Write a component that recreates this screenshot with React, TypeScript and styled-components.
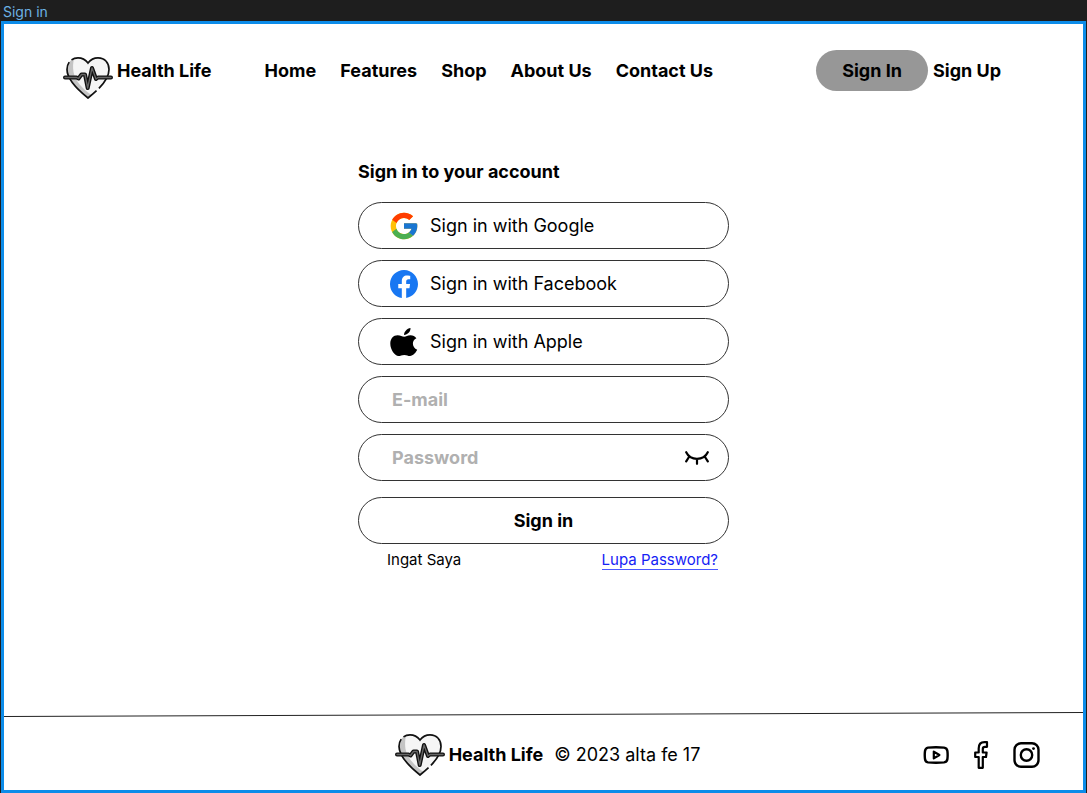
import React from "react";
import styled, { createGlobalStyle } from "styled-components";
import { FcGoogle } from "react-icons/fc";
import { BsFacebook } from "react-icons/bs";

const GlobalStyle = createGlobalStyle`
  *, *::before, *::after { box-sizing: border-box; }
  body {
    margin: 0;
    background: #1e1e1e;
    color: #000;
    font-family: Inter, "Liberation Sans", sans-serif;
    font-size: 18px;
  }
  button, input { font: inherit; color: inherit; }
  a { color: inherit; text-decoration: none; }
  svg { display: block; flex: none; }
`;

const Canvas = styled.div`
  display: flex;
  flex-direction: column;
  min-height: 100vh;
  padding: 0 1px;
`;

const FrameLabel = styled.div`
  padding: 3px 2px 0;
  font-size: 14px;
  line-height: 18px;
  color: #6cb2e4;
`;

const Frame = styled.div`
  flex: 1;
  display: flex;
  flex-direction: column;
  background: #fff;
  border: 3px solid #0c8ce9;
`;

const Header = styled.header`
  display: flex;
  align-items: flex-start;
  padding: 26px 82px 0 59px;
  font-weight: 700;
  line-height: 41px;
`;

const Brand = styled.a<{ $raised?: boolean }>`
  display: flex;
  align-items: ${(p) => (p.$raised ? "flex-start" : "center")};
  gap: 4px;
  padding-top: ${(p) => (p.$raised ? "7px" : "0")};
  font-weight: 700;
  line-height: 28px;
  white-space: nowrap;
`;

const Nav = styled.nav`
  display: flex;
  flex: 1;
  gap: 24px;
  margin-left: 53px;
  white-space: nowrap;
`;

const Auth = styled.div`
  display: flex;
  gap: 5px;
  white-space: nowrap;
`;

const PillLink = styled.a`
  padding: 0 26px;
  border-radius: 21px;
  background: #979797;
`;

const Main = styled.main`
  flex: 1;
  display: flex;
  justify-content: center;
  padding: 61px 16px 40px;
`;

const Form = styled.form`
  display: flex;
  flex-direction: column;
  gap: 11px;
  width: 100%;
  max-width: 371px;
`;

const Title = styled.h1`
  margin: 0 0 7px;
  font-size: 18px;
  line-height: 24px;
  font-weight: 700;
`;

const FieldButton = styled.button<{ $primary?: boolean }>`
  display: flex;
  align-items: center;
  justify-content: ${(p) => (p.$primary ? "center" : "flex-start")};
  gap: 12px;
  height: 47px;
  margin-top: ${(p) => (p.$primary ? "5px" : "0")};
  padding: 0 31px;
  border: 1px solid #333;
  border-radius: 24px;
  background: #fff;
  font-weight: ${(p) => (p.$primary ? 700 : 400)};
  cursor: pointer;
`;

const Field = styled.div`
  display: flex;
  align-items: center;
  height: 47px;
  padding: 0 18px 0 33px;
  border: 1px solid #333;
  border-radius: 24px;
`;

const Input = styled.input`
  flex: 1;
  min-width: 0;
  padding: 0;
  border: 0;
  outline: 0;
  background: transparent;
  font-weight: 700;
  &::placeholder { color: #b0b0b0; opacity: 1; }
`;

const IconButton = styled.button`
  padding: 0;
  border: 0;
  background: none;
  cursor: pointer;
`;

const Options = styled.div`
  display: flex;
  justify-content: space-between;
  margin-top: -5px;
  padding: 0 11px 0 29px;
  font-size: 15px;
  line-height: 20px;
`;

const ForgotLink = styled.a`
  color: #1522f5;
  border-bottom: 1px solid #4a58ff;
  line-height: 19px;
`;

const Rule = styled.svg`
  width: 100%;
  height: 5px;
`;

const Footer = styled.footer`
  display: grid;
  grid-template-columns: 1fr auto 1fr;
  align-items: center;
  height: 73px;
  padding: 2px 43px 0 51px;
`;

const FooterCenter = styled.div`
  grid-column: 2;
  display: flex;
  align-items: center;
  gap: 11px;
  white-space: nowrap;
`;

const Social = styled.div`
  display: flex;
  align-items: center;
  justify-content: flex-end;
  gap: 24px;
`;

const heart =
  "M25 6C21.500 1.500 18 .9 15 .9C8 .9 4 6 4 12.500C4 23 15 33 25 41C35 33 46 23 46 12.500C46 6 42 .9 35 .9C32 .9 28.500 1.500 25 6Z";
const pulse =
  "M2 20.5H13.5L15.5 21.5L18.5 17.5H22L24.7 31L29 11L33 22L35 20.5H48";

const HeartLogo = () => (
  <svg width="50" height="42" viewBox="0 0 50 42" fill="none" aria-hidden="true">
    <path d={heart} fill="#f5f5f5" />
    <path d="M11 1.800C6 3.500 4 8 4 12.500C4 23 15 33 25 41L28.500 38C20 32 12 24 10.500 15C9.800 10 10 6 11 1.800Z" fill="#c4c4c4" />
    <path d={heart} pathLength="100" strokeDasharray="14 2.500 42 2.500 39" stroke="#111" strokeWidth="1.700" />
    <path d={pulse} stroke="#111" strokeWidth="4" strokeLinecap="round" strokeLinejoin="round" />
    <path d={pulse} stroke="#666" strokeWidth="1.300" strokeLinecap="round" strokeLinejoin="round" />
  </svg>
);

const AppleLogo = () => (
  <svg width="28" height="28" viewBox="0 0 28 28" aria-hidden="true">
    <path d="M14 7C14 3.500 17 .5 20.500 0C20.800 3.500 17.500 6.800 14 7Z" />
    <path d="M14.200 8.800C16 8.800 17.500 7.200 20.500 7.200C23 7.200 25 8.400 26.400 10.200C24 11.500 22.900 13.300 22.900 15.600C22.900 18.500 24.600 20.800 27.200 21.800C26 24.500 23 28 20 28C17.800 28 17 26.900 14.300 26.900C11.500 26.900 10.500 28 8.600 28C4.500 28 .3 21.500 .3 15.800C.3 10.500 3.400 7.300 7.600 7.300C10.400 7.300 12.300 8.800 14.200 8.800Z" />
  </svg>
);

const ClosedEye = () => (
  <svg width="25" height="14" viewBox="0 0 25 14" fill="none" stroke="#000" strokeWidth="2.200" strokeLinecap="round" aria-hidden="true">
    <path d="M1.200 1.200C5.500 10 18.500 10 22.800 1.200M4.300 5.500L1.200 10.300M12 8V12.800M19.700 5.500L22.800 10.300" />
  </svg>
);

const YoutubeIcon = () => (
  <svg width="26" height="18" viewBox="0 0 26 18" fill="none" stroke="#000" strokeWidth="2.400" strokeLinejoin="round" aria-hidden="true">
    <path d="M5 1.600Q13 .8 21 1.600Q24 2 24.400 5Q24.900 9 24.400 13Q24 16 21 16.400Q13 17.200 5 16.400Q2.400 16 2 13Q1.500 9 2 5Q2.400 2 5 1.600Z" />
    <path d="M10.800 5.600L16.400 9L10.800 12.400Z" strokeWidth="2.200" />
  </svg>
);

const FacebookIcon = () => (
  <svg width="16" height="28" viewBox="0 0 16 28" fill="none" stroke="#000" strokeWidth="2.200" strokeLinejoin="round" aria-hidden="true">
    <path d="M14 1.200H11.500C7.500 1.200 5.700 3.500 5.700 7.500V11.500H2.200V16H5.700V26.800H9.800V16H13L13.600 11.500H9.800V8C9.800 6.500 10.500 5.800 12 5.800H14Z" />
  </svg>
);

const InstagramIcon = () => (
  <svg width="27" height="26" viewBox="0 0 27 26" fill="none" stroke="#000" strokeWidth="2.400" aria-hidden="true">
    <rect x="1.500" y="1.300" width="24" height="23.400" rx="6.500" />
    <circle cx="13.500" cy="13" r="5.700" />
    <circle cx="20.500" cy="6.600" r="1.400" fill="#000" stroke="none" />
  </svg>
);

const links = ["Home", "Features", "Shop", "About Us", "Contact Us"];

const providers = [
  { name: "Google", icon: <FcGoogle size={28} viewBox="3 3 42 42" /> },
  { name: "Facebook", icon: <BsFacebook size={28} color="#1877f2" /> },
  { name: "Apple", icon: <AppleLogo /> },
];

export default function App() {
  return (
    <Canvas>
      <GlobalStyle />
      <FrameLabel>Sign in</FrameLabel>
      <Frame>
        <Header>
          <Brand href="#" $raised>
            <HeartLogo />
            Health Life
          </Brand>
          <Nav>
            {links.map((link) => (
              <a href="#" key={link}>{link}</a>
            ))}
          </Nav>
          <Auth>
            <PillLink href="#">Sign In</PillLink>
            <a href="#">Sign Up</a>
          </Auth>
        </Header>
        <Main>
          <Form onSubmit={(e) => e.preventDefault()}>
            <Title>Sign in to your account</Title>
            {providers.map((p) => (
              <FieldButton type="button" key={p.name}>
                {p.icon}
                Sign in with {p.name}
              </FieldButton>
            ))}
            <Field>
              <Input type="email" placeholder="E-mail" aria-label="E-mail" />
            </Field>
            <Field>
              <Input type="password" placeholder="Password" aria-label="Password" />
              <IconButton type="button" aria-label="Show password">
                <ClosedEye />
              </IconButton>
            </Field>
            <FieldButton type="submit" $primary>Sign in</FieldButton>
            <Options>
              <span>Ingat Saya</span>
              <ForgotLink href="#">Lupa Password?</ForgotLink>
            </Options>
          </Form>
        </Main>
        <Rule viewBox="0 0 1080 5" preserveAspectRatio="none" aria-hidden="true">
          <line x1="0" y1="4.500" x2="1080" y2=".5" stroke="#222" vectorEffect="non-scaling-stroke" />
        </Rule>
        <Footer>
          <FooterCenter>
            <Brand href="#">
              <HeartLogo />
              Health Life
            </Brand>
            <span>© 2023 alta fe 17</span>
          </FooterCenter>
          <Social>
            <a href="#" aria-label="YouTube"><YoutubeIcon /></a>
            <a href="#" aria-label="Facebook"><FacebookIcon /></a>
            <a href="#" aria-label="Instagram"><InstagramIcon /></a>
          </Social>
        </Footer>
      </Frame>
    </Canvas>
  );
}
